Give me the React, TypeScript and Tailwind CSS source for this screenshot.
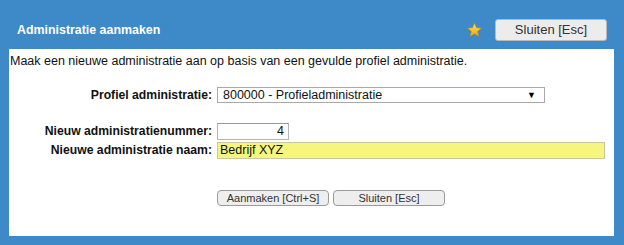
import React from "react";

function Star() {
  return (
    <svg width="15" height="14" viewBox="0 0 24 23" className="block">
      <defs>
        <linearGradient id="sg" x1="0" y1="0" x2="0" y2="1">
          <stop offset="0" stopColor="#ffe066" />
          <stop offset="1" stopColor="#f5a300" />
        </linearGradient>
      </defs>
      <polygon
        points="12,0.8 15.2,8 23,8.6 17,13.8 18.9,21.8 12,17.6 5.1,21.8 7,13.8 1,8.6 8.8,8"
        fill="url(#sg)"
        stroke="#e09400"
        strokeWidth="0.8"
      />
    </svg>
  );
}

export default function App() {
  return (
    <div
      className="w-[624px] h-[245px] bg-[#3e89c8] flex flex-col overflow-hidden"
      style={{ fontFamily: '"Liberation Sans", Arial, sans-serif' }}
    >
      <div className="h-[49px] pt-[11px] flex items-center justify-between pl-[17px] pr-[17px]">
        <div className="text-[12.4px] font-bold text-white">Administratie aanmaken</div>
        <div className="flex items-center gap-[13px]">
          <Star />
          <div className="w-[112px] h-[22px] bg-[#ececec] border border-[#b8b8b8] rounded-[3px] flex items-center justify-center text-[13px] text-[#333]">
            Sluiten [Esc]
          </div>
        </div>
      </div>
      <div className="ml-[9px] w-[605px] h-[187px] bg-white pt-[4px] flex flex-col text-[12.5px] text-[#111]">
        <div className="pl-[1px] leading-[16px]">
          Maak een nieuwe administratie aan op basis van een gevulde profiel administratie.
        </div>
        <div className="mt-[18px] grid grid-cols-[203px_auto] gap-x-[5px] items-center">
          <div className="text-right font-bold leading-[16px] text-[12.2px]">Profiel administratie:</div>
          <div className="w-[328px] h-[16px] border border-[#a9a9a9] flex items-center justify-between pl-[5px] pr-[8px] leading-[14px]">
            <span>800000 - Profieladministratie</span>
            <span className="text-[9px] text-black">▼</span>
          </div>
        </div>
        <div className="mt-[20px] grid grid-cols-[203px_auto] gap-x-[5px] gap-y-[2px] items-center">
          <div className="text-right font-bold leading-[17px] text-[12.2px]">Nieuw administratienummer:</div>
          <div className="w-[72px] h-[17px] border border-[#b5b5b5] border-t-[#999] flex items-center justify-end pr-[4px] leading-[15px]">
            4
          </div>
          <div className="text-right font-bold leading-[17px] text-[12.2px]">Nieuwe administratie naam:</div>
          <div className="w-[388px] h-[17px] bg-[#f6f67e] border border-[#c8c8a0] flex items-center pl-[2px] leading-[15px]">
            Bedrijf XYZ
          </div>
        </div>
        <div className="mt-[31px] ml-[208px] flex gap-[4px]">
          <div className="w-[112px] h-[16px] bg-[#eeeeee] border border-[#9a9a9a] rounded-[4px] flex items-center justify-center text-[11px] text-[#333]">
            Aanmaken [Ctrl+S]
          </div>
          <div className="w-[112px] h-[16px] bg-[#eeeeee] border border-[#9a9a9a] rounded-[4px] flex items-center justify-center text-[11px] text-[#333]">
            Sluiten [Esc]
          </div>
        </div>
      </div>
    </div>
  );
}
